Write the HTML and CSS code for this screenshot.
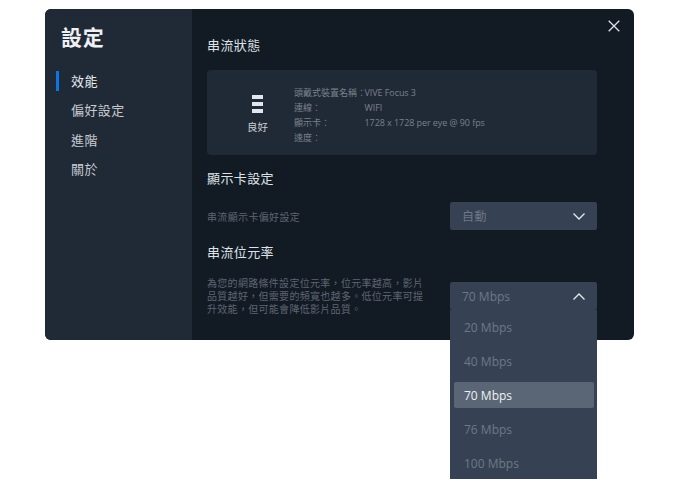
FILE: index.html
```html
<!DOCTYPE html>
<html lang="zh-Hant">
<head>
<meta charset="utf-8">
<title>設定</title>
<link rel="stylesheet" href="styles.css">
</head>
<body>
<div class="window">
  <aside class="sidebar">
    <h1 class="title">設定</h1>
    <nav class="nav">
      <div class="nav-item active">效能</div>
      <div class="nav-item">偏好設定</div>
      <div class="nav-item">進階</div>
      <div class="nav-item">關於</div>
    </nav>
  </aside>
  <main class="main">
    <svg class="close" width="12" height="12" viewBox="0 0 12 12"><path d="M.7.7l10.6 10.6M11.3.7L.7 11.3" stroke="#dfe3e8" stroke-width="1.3" fill="none"/></svg>
    <h2 class="h h-status">串流狀態</h2>
    <section class="card">
      <div class="signal">
        <div class="bars"><span></span><span></span><span></span></div>
        <div class="signal-label">良好</div>
      </div>
      <div class="info">
        <div class="info-row"><span class="info-key">頭戴式裝置名稱：</span><span class="info-val">VIVE Focus 3</span></div>
        <div class="info-row"><span class="info-key">連線：</span><span class="info-val">WIFI</span></div>
        <div class="info-row"><span class="info-key">顯示卡：</span><span class="info-val">1728 x 1728 per eye @ 90 fps</span></div>
        <div class="info-row"><span class="info-key">速度：</span><span class="info-val"></span></div>
      </div>
    </section>
    <h2 class="h h-gpu">顯示卡設定</h2>
    <div class="row row-gpu">
      <div class="label">串流顯示卡偏好設定</div>
      <div class="select">
        <span class="select-text cjk">自動</span>
        <svg width="12" height="7" viewBox="0 0 12 7"><path d="M.5.5L6 6 11.500.5" stroke="#e6e9ed" stroke-width="1.3" fill="none"/></svg>
      </div>
    </div>
    <h2 class="h h-bitrate">串流位元率</h2>
    <div class="row row-bitrate">
      <p class="desc">為您的網路條件設定位元率，位元率越高，影片品質越好，但需要的頻寬也越多。低位元率可提升效能，但可能會降低影片品質。</p>
      <div class="select-wrap">
        <div class="select">
          <span class="select-text">70 Mbps</span>
          <svg width="12" height="7" viewBox="0 0 12 7"><path d="M.5 6.500L6 1l5.500 5.500" stroke="#e6e9ed" stroke-width="1.3" fill="none"/></svg>
        </div>
        <ul class="menu">
          <li class="opt">20 Mbps</li>
          <li class="opt">40 Mbps</li>
          <li class="opt selected">70 Mbps</li>
          <li class="opt">76 Mbps</li>
          <li class="opt">100 Mbps</li>
        </ul>
      </div>
    </div>
  </main>
</div>
</body>
</html>
```
FILE: styles.css
```css
* { box-sizing: border-box; }
html, body { margin: 0; background: #fff; }
body {
  padding: 9px 63px 0 45px;
  height: 502px;
  overflow: hidden;
  font-family: "Open Sans", "Noto Sans CJK TC", sans-serif;
}
.window {
  display: flex;
  height: 331px;
  border-radius: 6px;
  background: #121a24;
}
.sidebar {
  width: 147px;
  flex: none;
  background: #202936;
  border-radius: 6px 0 0 6px;
  padding: 14px 0 0 16px;
}
.title {
  margin: 0;
  font-size: 21px;
  line-height: 29px;
  font-weight: 700;
  color: #eef0f3;
  letter-spacing: 0.8px;
}
.nav { margin-top: 15px; }
.nav-item {
  position: relative;
  font-size: 13px;
  line-height: 29.4px;
  padding-left: 10px;
  color: #c6cbd2;
  letter-spacing: 0.4px;
}
.nav-item.active { color: #e8ebee; }
.nav-item.active::before {
  content: "";
  position: absolute;
  left: -5px;
  top: 4px;
  width: 3px;
  height: 20px;
  background: #0a78e0;
}
.main {
  position: relative;
  flex: 1;
  padding: 0 37px 0 15px;
}
.close { position: absolute; top: 11px; right: 14px; }
.h {
  margin: 0;
  font-size: 13px;
  line-height: 20px;
  font-weight: 400;
  color: #dfe3e7;
  letter-spacing: 0.4px;
}
.h-status { padding-top: 27px; height: 46px; line-height: 18px; }
.card {
  display: flex;
  align-items: center;
  height: 85px;
  margin-top: 15px;
  background: #202936;
  border-radius: 4px;
}
.signal {
  width: 87px;
  flex: none;
  padding-left: 14px;
  display: flex;
  flex-direction: column;
  align-items: center;
  color: #c9ced4;
}
.bars { display: flex; flex-direction: column; gap: 3px; margin-top: 4px; }
.bars span { display: block; width: 11px; height: 4px; background: #dfe6ee; }
.signal-label { font-size: 10.5px; line-height: 14px; margin-top: 7px; }
.info { font-size: 9px; color: #79818c; padding-top: 4px; }
.info-row { display: flex; line-height: 15px; height: 15px; }
.info-key { width: 70.500px; flex: none; white-space: nowrap; }
.info-val { letter-spacing: -0.07px; }
.h-gpu { margin-top: 13px; }
.row { display: flex; justify-content: space-between; }
.row-gpu { align-items: center; margin-top: 14px; }
.label { font-size: 10px; color: #5e6672; letter-spacing: 0.35px; }
.select {
  width: 147px;
  height: 28px;
  flex: none;
  display: flex;
  align-items: center;
  justify-content: space-between;
  padding: 0 12px;
  background: #364254;
  border-radius: 2px;
  color: #6f7885;
  font-size: 12px;
}
.select-text.cjk { letter-spacing: 0.5px; }
.h-bitrate { margin-top: 12px; }
.row-bitrate { margin-top: 15px; position: relative; align-items: flex-start; }
.desc {
  margin: 0;
  width: 219px;
  font-size: 10px;
  line-height: 13.2px;
  color: #5e6672;
  letter-spacing: 0.3px;
}
.select-wrap { position: relative; width: 147px; flex: none; margin-top: 5px; }
.menu {
  position: absolute;
  top: 28px;
  left: 0;
  width: 147px;
  height: 169px;
  margin: 0;
  padding: 0 3px 0 4px;
  list-style: none;
  background: #364254;
  z-index: 2;
}
.opt {
  height: 26px;
  margin-bottom: 8px;
  padding: 1px 0 0 10px;
  font-size: 12px;
  line-height: 26px;
  color: #6f7885;
  border-radius: 2px;
}
.opt:first-child { margin-top: 4px; }
.opt.selected { background: #5a6676; color: #eef1f4; }
```
